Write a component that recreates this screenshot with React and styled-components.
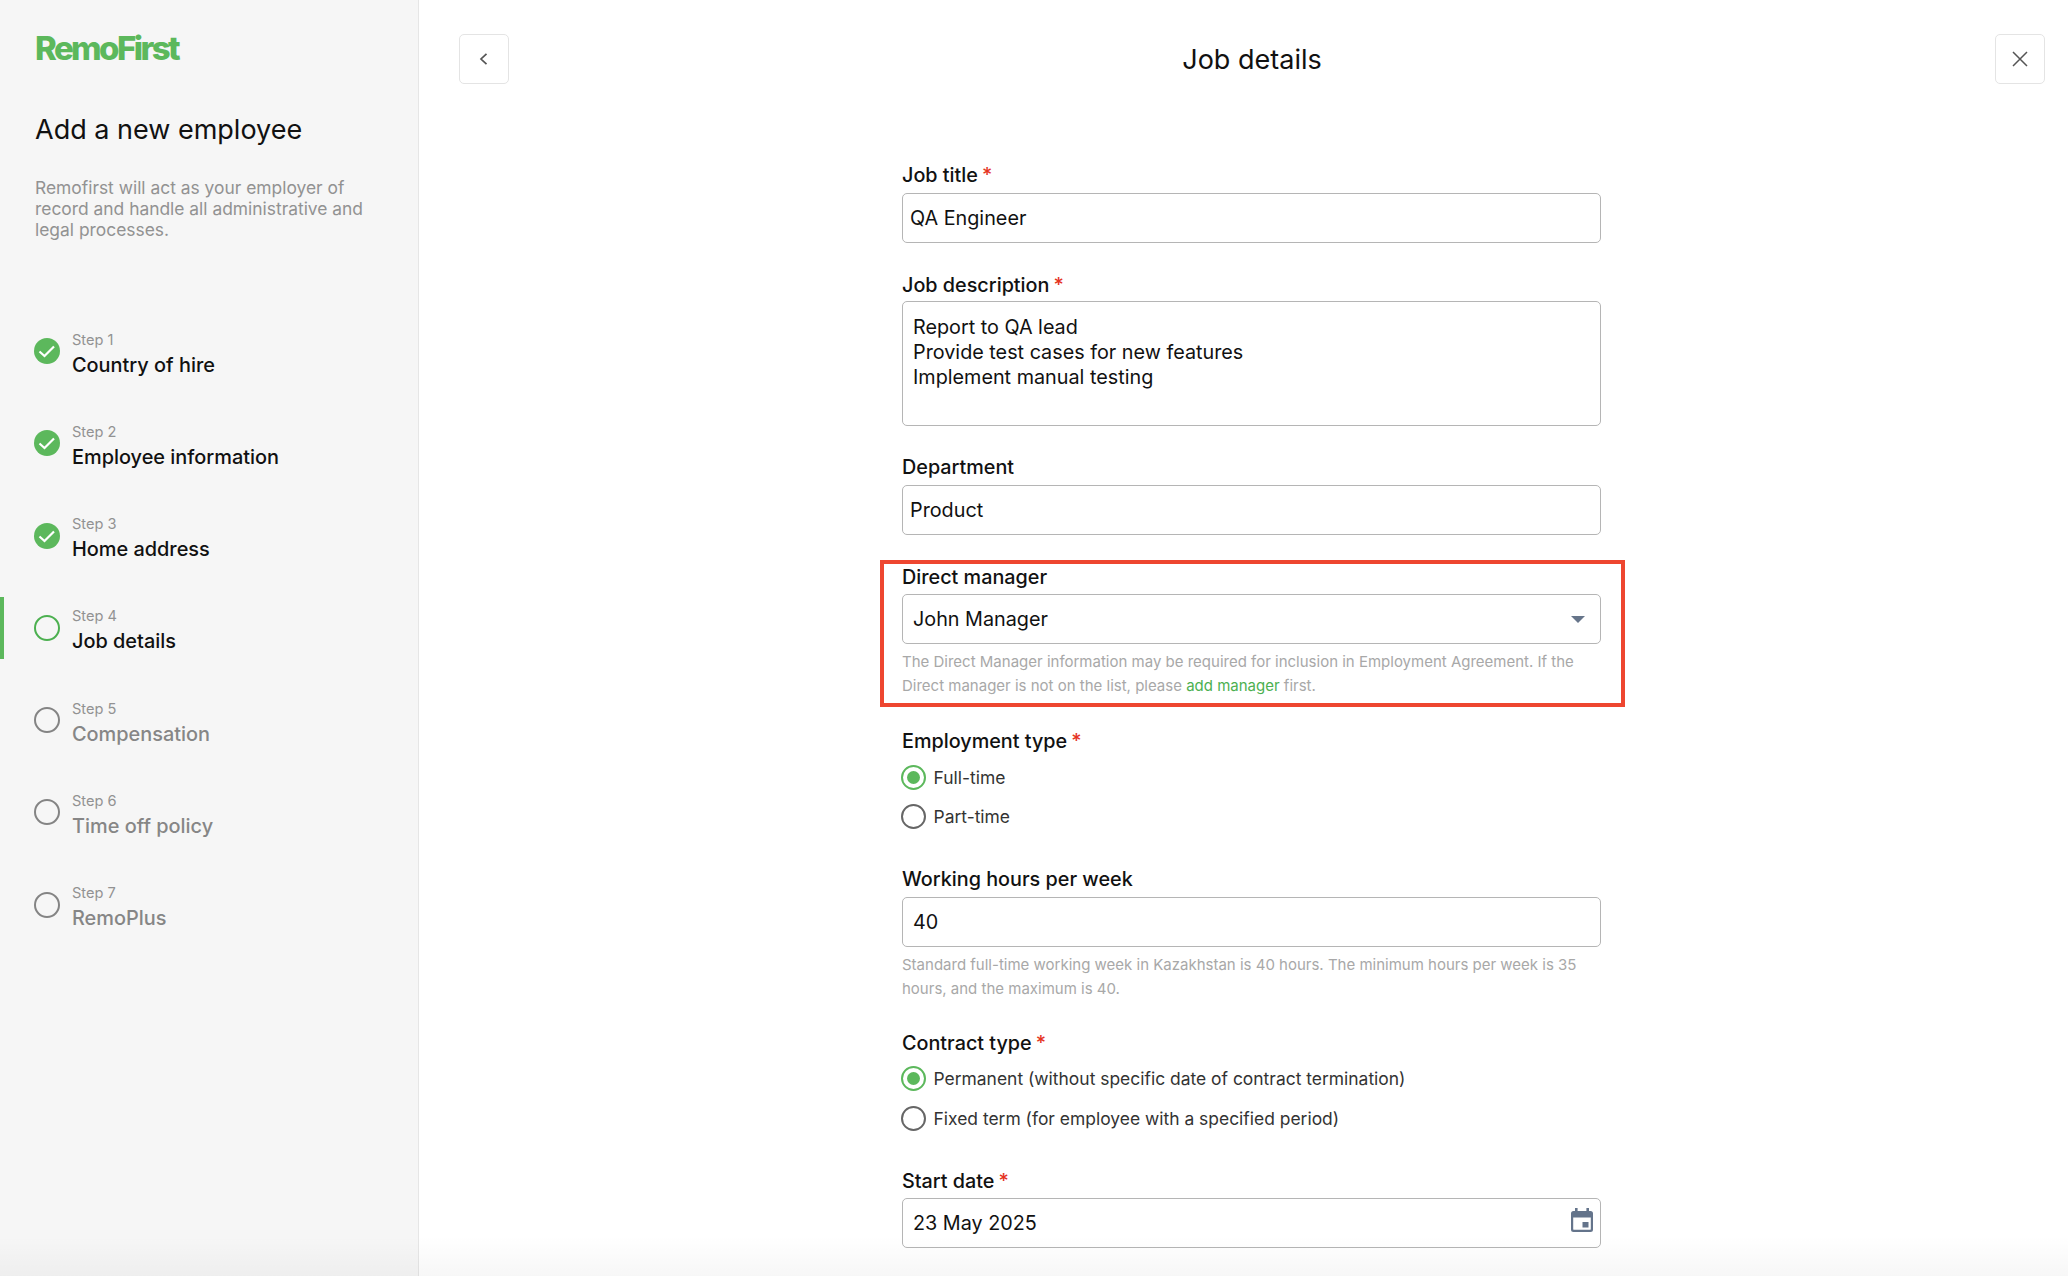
import React from "react";
import styled, { createGlobalStyle } from "styled-components";

const GlobalStyle = createGlobalStyle`
  html, body {
    margin: 0;
    padding: 0;
    height: 100%;
    overflow: hidden;
    background: #fff;
    font-family: "Inter", "Liberation Sans", sans-serif;
    color: #111;
  }
  * { box-sizing: border-box; }
`;

const Page = styled.div`
  position: relative;
  display: flex;
  height: 1276px;
  overflow: hidden;
`;

const Sidebar = styled.aside`
  width: 419px;
  flex-shrink: 0;
  background: #f6f6f6;
  border-right: 1px solid #e6e6e6;
  padding-top: 30px;
`;

const Logo = styled.div`
  margin-left: 35px;
  color: #5cb85c;
  font-size: 33px;
  line-height: 36px;
  font-weight: 800;
  letter-spacing: -2.6px;
`;

const Title = styled.h1`
  margin: 46px 0 0 35px;
  font-size: 27px;
  line-height: 36px;
  font-weight: 400;
  color: #111;
`;

const Intro = styled.p`
  margin: 29px 30px 0 35px;
  font-size: 17.4px;
  line-height: 21px;
  color: #929292;
`;

const Steps = styled.ol`
  list-style: none;
  margin: 80px 0 0;
  padding: 0;
`;

const Step = styled.li`
  display: flex;
  align-items: center;
  gap: 12px;
  height: 62px;
  margin-bottom: 30.3px;
  padding-left: ${(p) => (p.$current ? "30px" : "34px")};
  border-left: ${(p) => (p.$current ? "4px solid #5cb85c" : "none")};
`;

const StepCircle = styled.span`
  width: 26px;
  height: 26px;
  border-radius: 50%;
  border: 2px solid ${(p) => (p.$current ? "#4cb050" : "#848484")};
`;

const StepText = styled.div`
  display: flex;
  flex-direction: column;
  margin-top: 5px;
`;

const StepNumber = styled.span`
  font-size: 14.6px;
  line-height: 23px;
  color: #929292;
`;

const StepName = styled.span`
  font-size: 19.9px;
  line-height: 27px;
  font-weight: 500;
  color: ${(p) => (p.$muted ? "#868686" : "#111")};
`;

const Main = styled.main`
  flex: 1;
  padding: 34px 23px 0 40px;
`;

const Header = styled.header`
  display: flex;
  align-items: center;
  justify-content: space-between;
`;

const IconButton = styled.button`
  display: flex;
  align-items: center;
  justify-content: center;
  width: 50px;
  height: 50px;
  padding: 0;
  background: #fff;
  border: 1px solid #e4e4e4;
  border-radius: 5px;
`;

const PageTitle = styled.h2`
  margin: 2px 0 0;
  font-size: 27px;
  line-height: 36px;
  font-weight: 400;
  color: #111;
`;

const Form = styled.div`
  width: 699px;
  margin: 79px 0 0 443px;
`;

const Field = styled.div`
  margin-top: ${(p) => p.$gap || 0}px;
`;

const HighlightedField = styled.div`
  position: relative;
  margin-top: 30px;

  &::after {
    content: "";
    position: absolute;
    inset: -5px -24px -9px -22px;
    border: 4px solid #ee4630;
    pointer-events: none;
  }
`;

const Label = styled.div`
  height: 24px;
  margin-bottom: ${(p) => p.$below ?? 6}px;
  font-size: 19.8px;
  line-height: 24px;
  font-weight: 500;
  color: #111;
`;

const Required = styled.span`
  margin-left: 4px;
  color: #e5341f;
`;

const Input = styled.div`
  position: relative;
  display: flex;
  align-items: center;
  height: 50px;
  padding-left: ${(p) => (p.$tight ? "7px" : "10px")};
  background: #fff;
  border: 1px solid #b5b5b5;
  border-radius: 5px;
  font-size: 19.8px;
  color: #111;
`;

const TextArea = styled.div`
  height: 125px;
  padding: 13px 10px;
  background: #fff;
  border: 1px solid #b5b5b5;
  border-radius: 5px;
  font-size: 19.8px;
  line-height: 25px;
  color: #111;
`;

const Caret = styled.span`
  position: absolute;
  right: 15px;
  top: 21px;
  border-left: 7px solid transparent;
  border-right: 7px solid transparent;
  border-top: 7px solid #66758a;
`;

const InputIcon = styled.span`
  position: absolute;
  right: 6px;
  top: 8px;
  display: flex;
`;

const Help = styled.p`
  margin: 6px 0 0;
  font-size: 15px;
  line-height: 24px;
  color: #a8a8a8;
`;

const HelpLink = styled.span`
  color: #4cb050;
`;

const RadioList = styled.div`
  display: flex;
  flex-direction: column;
  gap: 15.6px;
  margin-top: 12px;
`;

const Radio = styled.label`
  display: flex;
  align-items: center;
  gap: 8px;
  height: 24px;
  font-size: 17.45px;
  color: #333;
`;

const RadioDot = styled.span`
  display: flex;
  align-items: center;
  justify-content: center;
  width: 25px;
  height: 25px;
  margin-left: -1.5px;
  border-radius: 50%;
  border: 2.5px solid ${(p) => (p.$checked ? "#5cb85c" : "#666")};

  &::after {
    content: "";
    display: ${(p) => (p.$checked ? "block" : "none")};
    width: 13px;
    height: 13px;
    border-radius: 50%;
    background: #5cb85c;
  }
`;

const BottomFade = styled.div`
  position: absolute;
  left: 0;
  right: 0;
  bottom: 0;
  height: 40px;
  background: linear-gradient(to bottom, rgba(0, 0, 0, 0), rgba(0, 0, 0, 0.03));
  pointer-events: none;
`;

const steps = [
  { n: 1, name: "Country of hire", state: "done" },
  { n: 2, name: "Employee information", state: "done" },
  { n: 3, name: "Home address", state: "done" },
  { n: 4, name: "Job details", state: "current" },
  { n: 5, name: "Compensation", state: "todo" },
  { n: 6, name: "Time off policy", state: "todo" },
  { n: 7, name: "RemoPlus", state: "todo" },
];

function CheckIcon() {
  return (
    <svg width="26" height="26" viewBox="0 0 26 26">
      <circle cx="13" cy="13" r="13" fill="#5cb85c" />
      <path d="M5.5 13.5l5 4.5 9.5-9.5" fill="none" stroke="#fff" strokeWidth="2.2" />
    </svg>
  );
}

function CalendarIcon() {
  return (
    <svg width="24" height="26" viewBox="0 0 24 26">
      <path
        d="M5 1h2.6v3h8.8V1H19v3h1.5A2.5 2.5 0 0 1 23 6.5v16a2.5 2.5 0 0 1-2.5 2.5h-17A2.5 2.5 0 0 1 1 22.5v-16A2.5 2.5 0 0 1 3.5 4H5zM3.2 10.5v11.8c0 .3.2.5.5.5h16.6c.3 0 .5-.2.5-.5V10.5z"
        fill="#64748b"
      />
      <rect x="12.5" y="15" width="6" height="5.5" fill="#64748b" />
    </svg>
  );
}

function App() {
  return (
    <>
      <GlobalStyle />
      <Page>
        <Sidebar>
          <Logo>RemoFirst</Logo>
          <Title>Add a new employee</Title>
          <Intro>
            Remofirst will act as your employer of record and handle all administrative and legal processes.
          </Intro>
          <Steps>
            {steps.map((step) => (
              <Step key={step.n} $current={step.state === "current"}>
                {step.state === "done" ? <CheckIcon /> : <StepCircle $current={step.state === "current"} />}
                <StepText>
                  <StepNumber>Step {step.n}</StepNumber>
                  <StepName $muted={step.state === "todo"}>{step.name}</StepName>
                </StepText>
              </Step>
            ))}
          </Steps>
        </Sidebar>

        <Main>
          <Header>
            <IconButton aria-label="Back">
              <svg width="12" height="12" viewBox="0 0 12 12">
                <path d="M8.5.8L3 6l5.5 5.2" fill="none" stroke="#555" strokeWidth="1.7" />
              </svg>
            </IconButton>
            <PageTitle>Job details</PageTitle>
            <IconButton aria-label="Close">
              <svg width="16" height="16" viewBox="0 0 16 16">
                <path d="M1 1l14 14M15 1L1 15" fill="none" stroke="#555" strokeWidth="1.5" />
              </svg>
            </IconButton>
          </Header>

          <Form>
            <Field>
              <Label>
                Job title<Required>*</Required>
              </Label>
              <Input $tight>QA Engineer</Input>
            </Field>

            <Field $gap={30}>
              <Label $below={4}>
                Job description<Required>*</Required>
              </Label>
              <TextArea>
                Report to QA lead
                <br />
                Provide test cases for new features
                <br />
                Implement manual testing
              </TextArea>
            </Field>

            <Field $gap={29}>
              <Label>Department</Label>
              <Input $tight>Product</Input>
            </Field>

            <HighlightedField>
              <Label $below={5}>Direct manager</Label>
              <Input>
                John Manager
                <Caret />
              </Input>
              <Help>
                The Direct Manager information may be required for inclusion in Employment Agreement. If the Direct
                manager is not on the list, please <HelpLink>add manager</HelpLink> first.
              </Help>
            </HighlightedField>

            <Field $gap={31}>
              <Label $below={0}>
                Employment type<Required>*</Required>
              </Label>
              <RadioList>
                <Radio>
                  <RadioDot $checked />
                  Full-time
                </Radio>
                <Radio>
                  <RadioDot />
                  Part-time
                </Radio>
              </RadioList>
            </Field>

            <Field $gap={38}>
              <Label>Working hours per week</Label>
              <Input>40</Input>
              <Help>
                Standard full-time working week in Kazakhstan is 40 hours. The minimum hours per week is 35 hours, and
                the maximum is 40.
              </Help>
            </Field>

            <Field $gap={30}>
              <Label $below={1}>
                Contract type<Required>*</Required>
              </Label>
              <RadioList>
                <Radio>
                  <RadioDot $checked />
                  Permanent (without specific date of contract termination)
                </Radio>
                <Radio>
                  <RadioDot />
                  Fixed term (for employee with a specified period)
                </Radio>
              </RadioList>
            </Field>

            <Field $gap={39}>
              <Label $below={5}>
                Start date<Required>*</Required>
              </Label>
              <Input>
                23 May 2025
                <InputIcon>
                  <CalendarIcon />
                </InputIcon>
              </Input>
            </Field>
          </Form>
        </Main>
        <BottomFade />
      </Page>
    </>
  );
}

export default App;
